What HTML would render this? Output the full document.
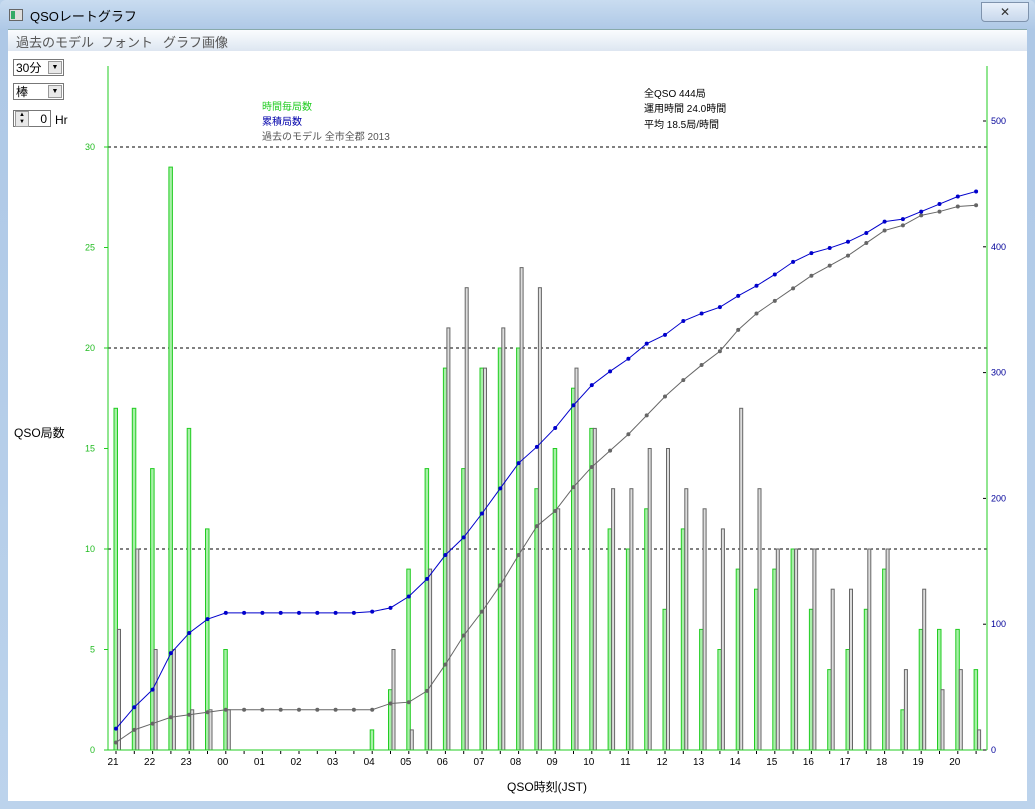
<!DOCTYPE html>
<html><head><meta charset="utf-8"><style>
html,body{margin:0;padding:0;width:1035px;height:809px;overflow:hidden;background:#b9d1ea;font-family:"Liberation Sans","Noto Sans CJK JP",sans-serif}
.win{position:absolute;left:0;top:0;width:1035px;height:809px;background:linear-gradient(#c9dcf0,#aec8e6 30px,#bcd3ec);border-radius:6px 6px 0 0}
.title{position:absolute;left:30px;top:6px;font-size:13px;color:#000}
.ico{position:absolute;left:9px;top:9px;width:12px;height:10px;border:1px solid #666;background:#ddd}
.ico:before{content:"";position:absolute;left:1px;top:1px;width:4px;height:8px;background:#3a6}
.close{position:absolute;left:981px;top:2px;width:46px;height:18px;border:1px solid #7f93ad;border-radius:0 0 4px 4px;background:linear-gradient(#e8f0fa,#c8d8ec);text-align:center;font-size:12px;line-height:18px;color:#333}
.menu{position:absolute;left:8px;top:29px;width:1019px;height:21px;background:linear-gradient(#fafcfe,#dde6f1);border-top:1px solid #8aa}
.menu span{position:absolute;top:2px;font-size:13px;color:#555}
.client{position:absolute;left:8px;top:51px;width:1019px;height:750px;background:#fff}
.sel{position:absolute;border:1px solid #777;background:#fff;font-size:12px;height:17px;line-height:17px;padding-left:2px;box-sizing:border-box}
.sel b{position:absolute;right:1px;top:1px;width:14px;height:13px;background:#e8e8e8;border:1px solid #999;box-sizing:border-box;font-size:7px;text-align:center;line-height:12px;font-weight:normal}
</style></head><body>
<div class="win">
<div class="ico"></div>
<div class="title">QSOレートグラフ</div>
<div class="close">✕</div>
<div class="menu"><span style="left:8px">過去のモデル</span><span style="left:93px">フォント</span><span style="left:155px">グラフ画像</span></div>
<div class="client"></div>
<div class="sel" style="left:13px;top:59px;width:51px">30分<b>▼</b></div>
<div class="sel" style="left:13px;top:83px;width:51px">棒<b>▼</b></div>
<div class="sel" style="left:13px;top:110px;width:38px;text-align:right;padding-right:3px">0<b style="left:1px;right:auto;height:16px;top:0;font-size:6px;line-height:7px">▲<br>▼</b></div>
<div style="position:absolute;left:55px;top:113px;font-size:12px">Hr</div>
<svg width="1035" height="809" style="position:absolute;left:0;top:0" id="g" font-family="Liberation Sans, Noto Sans CJK JP, sans-serif"></svg>
</div>
<script>
var G=[17,17,14,29,16,11,5,0,0,0,0,0,0,0,1,3,9,14,19,14,19,20,20,13,15,18,16,11,10,12,7,11,6,5,9,8,9,10,7,4,5,7,9,2,6,6,6,4];
var R=[6,10,5,5,2,2,2,0,0,0,0,0,0,0,0,5,1,9,21,23,19,21,24,23,12,19,16,13,13,15,15,13,12,11,17,13,10,10,10,8,8,10,10,4,8,3,4,1];
var s='',Y0=750,ly=20.1,ry=1.258;
function X(i){return 116+18.3*i}
[30,20,10].forEach(function(v){var y=Y0-v*ly;s+='<line x1="108" y1="'+y+'" x2="987" y2="'+y+'" stroke="#000" stroke-dasharray="3,3"/>'});
for(var i=0;i<48;i++){var x=X(i);
if(G[i]){var h=G[i]*ly;s+='<rect x="'+(x-2)+'" y="'+(Y0-h)+'" width="3.5" height="'+h+'" fill="#a8f0a8" stroke="#22cc22" stroke-width="1"/>';}
if(R[i]){var h=R[i]*ly;s+='<rect x="'+(x+1.5)+'" y="'+(Y0-h)+'" width="3" height="'+h+'" fill="#ddd" stroke="#666" stroke-width="1"/>';}
s+='<line x1="'+x+'" y1="751" x2="'+x+'" y2="754" stroke="#000"/>';}
function line(a,c){var cum=0,p=[],d='';for(var i=0;i<48;i++){cum+=a[i];var x=X(i),y=Y0-cum*ry;p.push(x+','+y);d+='<circle cx="'+x+'" cy="'+y+'" r="2" fill="'+c+'"/>';}
return '<polyline points="'+p.join(' ')+'" fill="none" stroke="'+c+'" stroke-width="1"/>'+d;}
s+=line(R,'#666')+line(G,'#0000cc');
s+='<line x1="108" y1="66" x2="108" y2="750" stroke="#22cc22"/><line x1="987" y1="66" x2="987" y2="750" stroke="#22cc22"/><line x1="108" y1="750" x2="987" y2="750" stroke="#22cc22"/>';
for(var v=0;v<=30;v+=5){var y=Y0-v*ly;s+='<text x="95" y="'+(y+3)+'" font-size="9" fill="#22bb22" text-anchor="end">'+v+'</text><line x1="104" y1="'+y+'" x2="108" y2="'+y+'" stroke="#22cc22"/>';}
for(var v=0;v<=500;v+=100){var y=Y0-v*ry;s+='<text x="991" y="'+(y+3)+'" font-size="9" fill="#000099">'+v+'</text><line x1="983" y1="'+y+'" x2="986" y2="'+y+'" stroke="#000"/>';}
var L=['21','22','23','00','01','02','03','04','05','06','07','08','09','10','11','12','13','14','15','16','17','18','19','20'];
L.forEach(function(t,k){s+='<text x="'+(X(2*k)-3)+'" y="765" font-size="10" fill="#000" text-anchor="middle">'+t+'</text>'});
s+='<text x="14" y="437" font-size="12">QSO局数</text><text x="547" y="791" font-size="12" text-anchor="middle">QSO時刻(JST)</text>';
s+='<text x="262" y="110" font-size="10" fill="#22cc22">時間毎局数</text><text x="262" y="125" font-size="10" fill="#0000aa">累積局数</text><text x="262" y="140" font-size="10" fill="#555">過去のモデル 全市全郡 2013</text>';
s+='<text x="644" y="97" font-size="10">全QSO 444局</text><text x="644" y="112" font-size="10">運用時間 24.0時間</text><text x="644" y="128" font-size="10">平均 18.5局/時間</text>';
document.getElementById('g').innerHTML=s;
</script>
</body></html>
